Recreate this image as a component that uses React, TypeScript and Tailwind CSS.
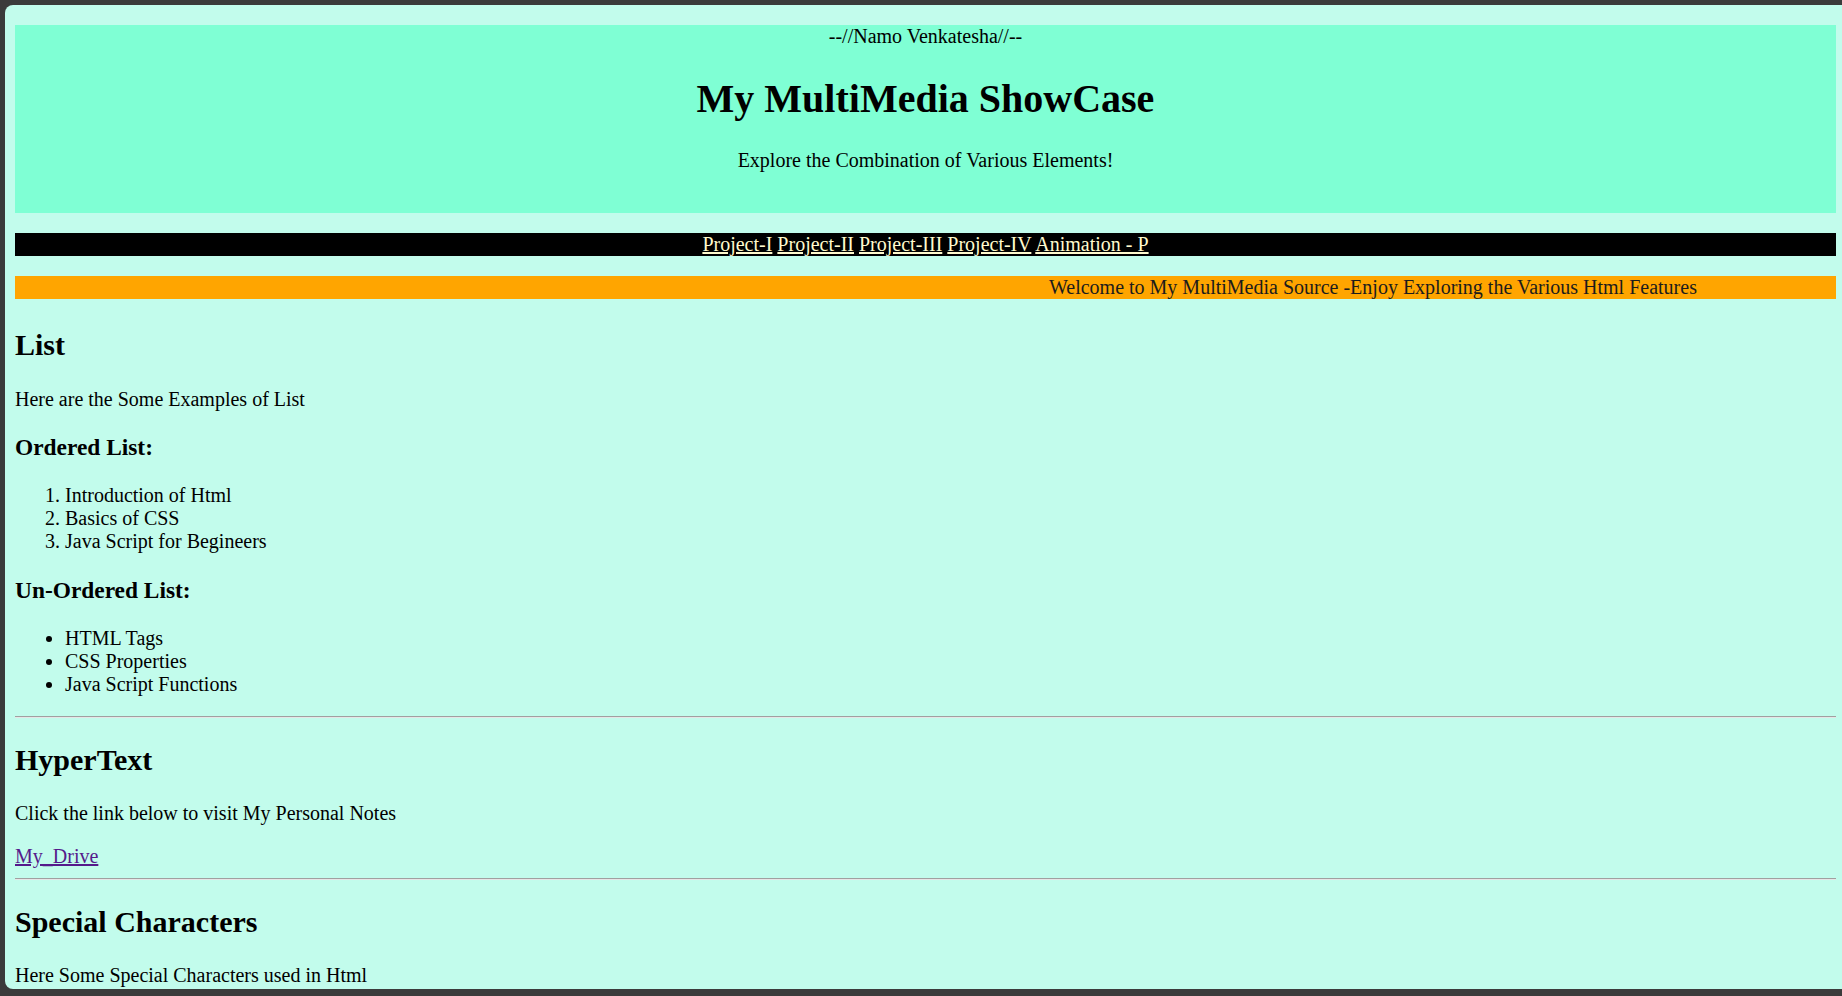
const navLinks = ["Project-I", "Project-II", "Project-III", "Project-IV", "Animation - P"];

const orderedItems = ["Introduction of Html", "Basics of CSS", "Java Script for Begineers"];
const unorderedItems = ["HTML Tags", "CSS Properties", "Java Script Functions"];

function Rule() {
  return <hr className="border-0 border-t border-b border-t-[#a0a0a0] border-b-[#e6e6e6] h-[2px]" />;
}

export default function App() {
  return (
    <div className="h-screen w-full overflow-hidden bg-[#3b3b3b] pt-[5px] pl-[5px] pb-[7px] font-['Liberation_Serif','Times_New_Roman',serif] text-[20px] leading-[normal] text-black">
      <div className="h-full overflow-hidden rounded-tl-[8px] rounded-bl-[8px] bg-[#c2fcec] pt-[20px] pl-[10px] pr-[6px]">
        <header className="h-[188px] bg-[#7fffd4] text-center">
          <div>--//Namo Venkatesha//--</div>
          <h1 className="mt-[26.8px] text-[40px] font-bold leading-[normal]">My MultiMedia ShowCase</h1>
          <p className="mt-[26.8px]">Explore the Combination of Various Elements!</p>
        </header>

        <nav className="mt-[20px] h-[23px] bg-black text-center">
          {navLinks.map((link, i) => (
            <span key={link}>
              <a href="#" className="text-[#fffacd] underline">
                {link}
              </a>
              {i < navLinks.length - 1 ? " " : ""}
            </span>
          ))}
        </nav>

        <div className="mt-[20px] h-[23px] overflow-hidden whitespace-nowrap bg-[#ffa500] pl-[1034px] text-[#1c1c1c]">
          Welcome to My MultiMedia Source -Enjoy Exploring the Various Html Features
        </div>

        <section>
          <h2 className="mt-[28.6px] text-[30px] font-bold leading-[normal]">List</h2>
          <p className="mt-[26px]">Here are the Some Examples of List</p>
          <h3 className="mt-[23.4px] text-[23.4px] font-bold leading-[normal]">Ordered List:</h3>
          <ol className="mt-[23.4px] list-decimal pl-[50px]">
            {orderedItems.map((item) => (
              <li key={item}>{item}</li>
            ))}
          </ol>
          <h3 className="mt-[23.4px] text-[23.4px] font-bold leading-[normal]">Un-Ordered List:</h3>
          <ul className="mt-[23.4px] mb-[20px] list-disc pl-[50px]">
            {unorderedItems.map((item) => (
              <li key={item}>{item}</li>
            ))}
          </ul>
        </section>

        <Rule />

        <section>
          <h2 className="mt-[24.9px] text-[30px] font-bold leading-[normal]">HyperText</h2>
          <p className="mt-[24.9px] mb-[20px]">Click the link below to visit My Personal Notes</p>
          <a href="#" className="text-[#551a8b] underline">
            My_Drive
          </a>
        </section>

        <div className="mt-[10px]">
          <Rule />
        </div>

        <section>
          <h2 className="mt-[24.9px] text-[30px] font-bold leading-[normal]">Special Characters</h2>
          <p className="mt-[24.9px]">Here Some Special Characters used in Html</p>
        </section>
      </div>
    </div>
  );
}
